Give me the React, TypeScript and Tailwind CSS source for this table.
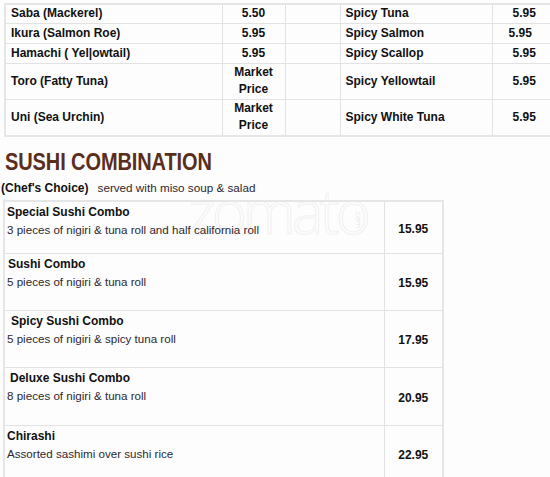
import React from "react";

const top = [
  { n: "Saba (Mackerel)", p: "5.50", rn: "Spicy Tuna", rp: "5.95", h: "h-[19px]" },
  { n: "Ikura (Salmon Roe)", p: "5.95", rn: "Spicy Salmon", rp: "5.95", h: "h-[20px]", shift: true },
  { n: "Hamachi ( Yel|owtail)", p: "5.95", rn: "Spicy Scallop", rp: "5.95", h: "h-[20px]" },
  { n: "Toro (Fatty Tuna)", p: "Market Price", rn: "Spicy Yellowtail", rp: "5.95", h: "h-[36px]" },
  { n: "Uni (Sea Urchin)", p: "Market Price", rn: "Spicy White Tuna", rp: "5.95", h: "h-[37px]" },
];

const combos = [
  { n: "Special Sushi Combo", d: "3 pieces of nigiri & tuna roll and half california roll", p: "15.95", h: "h-[52px]", ml: "ml-0" },
  { n: "Sushi Combo", d: "5 pieces of nigiri & tuna roll", p: "15.95", h: "h-[57px]", ml: "ml-[1px]" },
  { n: "Spicy Sushi Combo", d: "5 pieces of nigiri & spicy tuna roll", p: "17.95", h: "h-[57px]", ml: "ml-[4px]" },
  { n: "Deluxe Sushi Combo", d: "8 pieces of nigiri & tuna roll", p: "20.95", h: "h-[58px]", ml: "ml-[3px]" },
  { n: "Chirashi", d: "Assorted sashimi over sushi rice", p: "22.95", h: "h-[57px]", ml: "ml-0" },
];

export default function App() {
  const cell = "border border-[#e2e2e2] p-0";
  return (
    <div
      className="relative w-[550px] h-[477px] overflow-hidden bg-[#fdfdfd] text-[12px] leading-[17px] text-[#111]"
      style={{ fontFamily: '"Liberation Sans", Arial, sans-serif' }}
    >
      <div
        className="absolute left-[188px] top-[176px] text-[60px] leading-[70px] tracking-[-4px] text-transparent [-webkit-text-stroke:1px_#f0f0f0] pointer-events-none select-none"
        style={{ fontFamily: '"Open Sans", sans-serif', fontWeight: 300 }}
      >
        zomato
      </div>
      <div
        className="absolute left-[364px] top-[210px] text-[8px] leading-[9px] text-[#e8e8e8] rotate-90 origin-top-left pointer-events-none select-none"
        style={{ fontFamily: '"Open Sans", sans-serif' }}
      >
        .com
      </div>

      <div className="relative pl-[4px] pt-[3px]">
        <table className="table-fixed border-collapse w-[553px] border-2 border-[#e6e6e6]">
          <colgroup>
            <col className="w-[217px]" />
            <col className="w-[63px]" />
            <col className="w-[55px]" />
            <col className="w-[152px]" />
            <col className="w-[66px]" />
          </colgroup>
          <tbody>
            {top.map((r) => (
              <tr key={r.n} className={r.h}>
                <td className={`${cell} pl-[5px] font-bold align-middle`}>{r.n}</td>
                <td className={`${cell} text-center font-bold align-middle`}>
                  {r.p === "Market Price" ? (
                    <>
                      Market
                      <br />
                      Price
                    </>
                  ) : (
                    r.p
                  )}
                </td>
                <td className={cell}></td>
                <td className={`${cell} pl-[5px] font-bold align-middle`}>{r.rn}</td>
                <td className={`${cell} font-bold align-middle text-left pl-[20px]`}>
                  <span className={r.shift ? "-ml-[4px]" : ""}>{r.rp}</span>
                </td>
              </tr>
            ))}
          </tbody>
        </table>
      </div>

      <div className="relative pl-[5px] mt-[13px] h-[24px] flex items-center">
        <h2 className="inline-block origin-center scale-y-120 text-[20px] leading-[24px] font-bold text-[#5b2d1c] tracking-[-0.1px]">
          SUSHI COMBINATION
        </h2>
      </div>

      <div className="relative pl-[1px] mt-[5px] h-[17px] text-[#2d2830]">
        <span className="font-bold text-[#111]">(Chef's Choice)</span>
        <span className="ml-[9px] text-[11.7px]">served with miso soup &amp; salad</span>
      </div>

      <div className="relative pl-[3px] mt-[4px]">
        <table className="table-fixed border-collapse w-[439px] border-2 border-[#e6e6e6]">
          <colgroup>
            <col className="w-[380px]" />
            <col className="w-[59px]" />
          </colgroup>
          <tbody>
            {combos.map((c) => (
              <tr key={c.n} className={c.h}>
                <td className={`${cell} align-top pl-[2px] pt-[2px]`}>
                  <div className={`font-bold ${c.ml}`}>{c.n}</div>
                  <div className="text-[#2d2830] text-[11.6px]">{c.d}</div>
                </td>
                <td className={`${cell} align-middle text-center font-bold pt-[4px]`}>{c.p}</td>
              </tr>
            ))}
          </tbody>
        </table>
      </div>
    </div>
  );
}
